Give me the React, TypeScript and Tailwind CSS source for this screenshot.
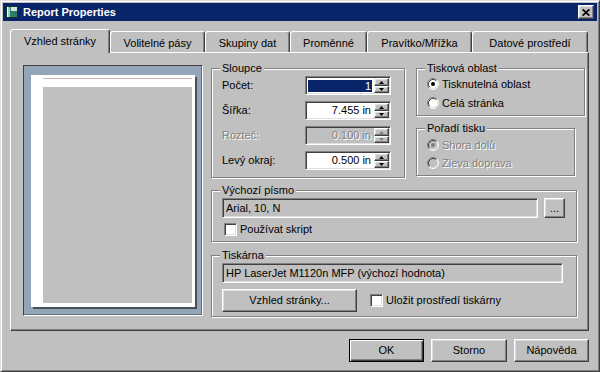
import type { ReactNode } from 'react';

// Windows classic 3D edges
const raised =
  'border border-t-white border-l-white border-r-[#404040] border-b-[#404040] shadow-[inset_-1px_-1px_#808080,inset_1px_1px_#dfdfdf]';
const sunken =
  'border border-t-[#808080] border-l-[#808080] border-r-white border-b-white shadow-[inset_1px_1px_#404040,inset_-1px_-1px_#dfdfdf]';
const etched = 'border border-[#808080] shadow-[inset_1px_1px_white,1px_1px_white]';
const greyed = 'text-[#808080] [text-shadow:1px_1px_0_white]';

function AppIcon() {
  return (
    <svg width="12" height="12" viewBox="0 0 12 12">
      <rect x="0.5" y="0.5" width="11" height="11" fill="#2f7d6a" stroke="#14322b" />
      <rect x="1" y="1" width="3" height="10" fill="#8fd6b8" />
      <rect x="5" y="1" width="6" height="4" fill="#d8e4e0" />
      <rect x="1" y="1" width="1" height="10" fill="#ffffff" />
    </svg>
  );
}

function CloseGlyph() {
  return (
    <svg width="8" height="7" viewBox="0 0 8 7">
      <path d="M0.6 0.4 L7.4 6.6 M7.4 0.4 L0.6 6.6" stroke="black" strokeWidth="1.7" />
    </svg>
  );
}

function Arrow({ up, off }: { up?: boolean; off?: boolean }) {
  const color = off ? '#808080' : '#000000';
  return (
    <svg width="5" height="3" viewBox="0 0 5 3">
      {up ? <path d="M2.5 0 L5 3 L0 3 Z" fill={color} /> : <path d="M0 0 L5 0 L2.5 3 Z" fill={color} />}
    </svg>
  );
}

function SpinBox({ value, selected, off }: { value: string; selected?: boolean; off?: boolean }) {
  return (
    <div className={`w-[86px] h-[19px] flex p-[1px] ${sunken} ${off ? 'bg-[#c0c0c0]' : 'bg-white'}`}>
      <div className="flex-1 flex items-center justify-end">
        {selected ? (
          <span className="w-full ml-[1px] mr-[2px] mt-[1px] h-[12px] leading-[12px] bg-[#0a246a] text-white text-right pr-[1px]">
            {value}
          </span>
        ) : (
          <span className={`pr-[3px] ${off ? greyed : ''}`}>{value}</span>
        )}
      </div>
      <div className="w-[15px] flex flex-col">
        <div className={`h-[8px] flex items-center justify-center bg-[#c0c0c0] ${raised}`}>
          <Arrow up off={off} />
        </div>
        <div className={`h-[7px] flex items-center justify-center bg-[#c0c0c0] ${raised}`}>
          <Arrow off={off} />
        </div>
      </div>
    </div>
  );
}

function Radio({ label, checked, off }: { label: string; checked?: boolean; off?: boolean }) {
  return (
    <div className="flex items-center h-[16px]">
      <svg width="12" height="12" viewBox="0 0 12 12">
        <circle cx="6" cy="6" r="5" fill={off ? '#c0c0c0' : '#ffffff'} />
        <path d="M2.11 9.89 A5.5 5.5 0 0 1 9.89 2.11" stroke="#808080" fill="none" />
        <path d="M9.89 2.11 A5.5 5.5 0 0 1 2.11 9.89" stroke="#ffffff" fill="none" />
        <path d="M2.82 9.18 A4.5 4.5 0 0 1 9.18 2.82" stroke="#404040" fill="none" />
        <path d="M9.18 2.82 A4.5 4.5 0 0 1 2.82 9.18" stroke="#dfdfdf" fill="none" />
        {checked && <circle cx="6" cy="6" r="2" fill={off ? '#808080' : '#000000'} />}
      </svg>
      <span className={`ml-[3px] ${off ? greyed : ''}`}>{label}</span>
    </div>
  );
}

function Check({ label }: { label: string }) {
  return (
    <div className="flex items-center h-[13px]">
      <div className={`w-[13px] h-[13px] bg-white ${sunken}`} />
      <span className="ml-[3px]">{label}</span>
    </div>
  );
}

function GroupBox({ title, className, children }: { title: string; className: string; children?: ReactNode }) {
  return (
    <div className={`relative ${etched} ${className}`}>
      <span className="absolute -top-[7px] left-[8px] bg-[#c0c0c0] px-[2px] leading-[13px]">{title}</span>
      {children}
    </div>
  );
}

function Button({ label, width, isDefault }: { label: string; width: string; isDefault?: boolean }) {
  const edge = isDefault
    ? 'border border-black shadow-[inset_1px_1px_white,inset_-1px_-1px_#404040,inset_-2px_-2px_#808080]'
    : raised;
  return <div className={`${width} h-[23px] flex items-center justify-center bg-[#c0c0c0] ${edge}`}>{label}</div>;
}

const tabs = [
  { label: 'Volitelné pásy', w: 'w-[95px]' },
  { label: 'Skupiny dat', w: 'w-[85px]' },
  { label: 'Proměnné', w: 'w-[77px]' },
  { label: 'Pravítko/Mřížka', w: 'w-[105px]' },
  { label: 'Datové prostředí', w: 'w-[116px]' },
];

export default function App() {
  return (
    <div className="w-[600px] h-[372px] bg-[#c0c0c0] text-[11px] leading-[13px] text-black font-['Liberation_Sans',Arial,sans-serif] border border-t-[#dfdfdf] border-l-[#dfdfdf] border-r-[#404040] border-b-[#404040] shadow-[inset_1px_1px_white,inset_-1px_-1px_#808080] p-[2px] flex flex-col">
      <div className="h-[18px] bg-[#0a246a] flex items-center pl-[3px] pr-[3px]">
        <AppIcon />
        <span className="ml-[5px] text-white font-bold">Report Properties</span>
        <div className={`ml-auto w-[16px] h-[14px] flex items-center justify-center bg-[#c0c0c0] ${raised}`}>
          <CloseGlyph />
        </div>
      </div>

      <div className="mt-[8px] ml-[7px] mr-[8px] flex flex-col">
        <div className="flex items-end h-[23px]">
          <div className="relative z-10 w-[100px] h-[24px] -mb-px flex items-center justify-center bg-[#c0c0c0] border-l border-t border-r border-l-white border-t-white border-r-[#404040] rounded-t-[3px] shadow-[inset_-1px_0_#808080]">
            Vzhled stránky
          </div>
          {tabs.map((t) => (
            <div
              key={t.label}
              className={`${t.w} h-[21px] pt-[2px] flex items-center justify-center border-l border-t border-r border-l-white border-t-white border-r-[#404040] rounded-t-[3px] shadow-[inset_-1px_0_#808080]`}
            >
              {t.label}
            </div>
          ))}
        </div>

        <div className="h-[279px] flex pl-[12px] pt-[12px] border border-t-white border-l-white border-r-[#404040] border-b-[#404040] shadow-[inset_-1px_-1px_#808080]">
          {/* page preview */}
          <div className="w-[180px] h-[251px] bg-[#93a5b6] pl-[7px] pt-[9px] border border-t-[#404040] border-l-[#404040] border-r-white border-b-white shadow-[inset_-1px_-1px_#5f6f7d]">
            <div className="w-[164px] h-[232px] bg-white pl-[12px] pt-[3px] shadow-[2px_2px_0_#454f58]">
              <div className="w-[149px] h-[225px] bg-[#c0c0c0] border-t border-t-[#c9b7b7] flex flex-col">
                <div className="h-[8px] bg-white" />
              </div>
            </div>
          </div>

          <div className="ml-[8px] mt-[3px] flex flex-col">
            <div className="flex">
              <GroupBox title="Sloupce" className="w-[194px] h-[110px] pt-[7px] pl-[10px] flex flex-col gap-[6px]">
                <div className="flex items-center h-[19px]">
                  <span className="w-[83px]">Počet:</span>
                  <SpinBox value="1" selected />
                </div>
                <div className="flex items-center h-[19px]">
                  <span className="w-[83px]">Šířka:</span>
                  <SpinBox value="7.455 in" />
                </div>
                <div className="flex items-center h-[19px]">
                  <span className={`w-[83px] ${greyed}`}>Rozteč:</span>
                  <SpinBox value="0.100 in" off />
                </div>
                <div className="flex items-center h-[19px]">
                  <span className="w-[83px]">Levý okraj:</span>
                  <SpinBox value="0.500 in" />
                </div>
              </GroupBox>

              <div className="ml-[11px] flex flex-col">
                <GroupBox title="Tisková oblast" className="w-[169px] h-[48px] pt-[7px] pl-[10px] flex flex-col gap-[3px]">
                  <Radio label="Tisknutelná oblast" checked />
                  <Radio label="Celá stránka" />
                </GroupBox>
                <GroupBox title="Pořadí tisku" className="mt-[12px] w-[159px] h-[48px] pt-[8px] pl-[10px] flex flex-col gap-[2px]">
                  <Radio label="Shora dolů" checked off />
                  <Radio label="Zleva doprava" off />
                </GroupBox>
              </div>
            </div>

            <GroupBox title="Výchozí písmo" className="mt-[12px] w-[366px] h-[52px] pt-[7px] pl-[10px] flex flex-col">
              <div className="flex">
                <div className={`w-[316px] h-[20px] flex items-center pl-[3px] bg-[#c0c0c0] ${sunken}`}>Arial, 10, N</div>
                <div className={`ml-[6px] w-[21px] h-[20px] flex items-center justify-center bg-[#c0c0c0] ${raised}`}>...</div>
              </div>
              <div className="mt-[5px] ml-[2px]">
                <Check label="Používat skript" />
              </div>
            </GroupBox>

            <GroupBox title="Tiskárna" className="mt-[13px] w-[366px] h-[62px] pt-[7px] pl-[10px] flex flex-col">
              <div className={`w-[341px] h-[20px] flex items-center pl-[3px] bg-[#c0c0c0] ${sunken}`}>
                HP LaserJet M1120n MFP (výchozí hodnota)
              </div>
              <div className="mt-[6px] flex items-center">
                <Button label="Vzhled stránky..." width="w-[135px]" />
                <div className="ml-[13px]">
                  <Check label="Uložit prostředí tiskárny" />
                </div>
              </div>
            </GroupBox>
          </div>
        </div>

        <div className="mt-[8px] flex justify-end gap-[7px]">
          <Button label="OK" width="w-[75px]" isDefault />
          <Button label="Storno" width="w-[76px]" />
          <Button label="Nápověda" width="w-[75px]" />
        </div>
      </div>
    </div>
  );
}
